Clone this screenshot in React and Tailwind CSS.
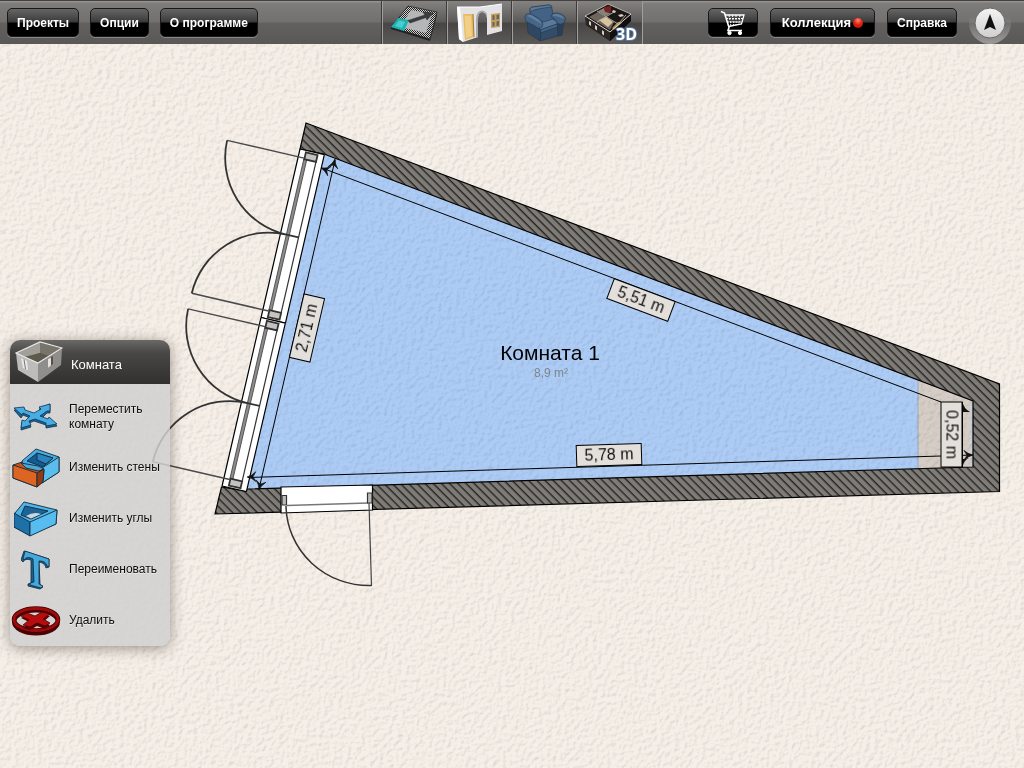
import React from "react";

const FONT = "'Liberation Sans', Arial, sans-serif";

/* ---------- toolbar ---------- */

function BarButton({ children, label, wide }) {
  return (
    <button
      type="button"
      aria-label={label}
      className={`flex h-[29px] items-center justify-center rounded-[5px] border border-[#191919] bg-[linear-gradient(to_bottom,#666_0%,#3a3a3a_48%,#000_52%,#000_100%)] leading-[16px] font-bold text-white shadow-[0_1px_0_#8a8884] ${wide ? "px-[11px] text-[13px]" : "px-[9px] text-[12px]"}`}
    >
      {children}
    </button>
  );
}

function ToolButton({ label, children }) {
  return (
    <button
      type="button"
      aria-label={label}
      className="flex h-full w-[65px] items-center justify-center border-l border-l-[#a19f9c] shadow-[-1px_0_0_#3c3b39]"
    >
      {children}
    </button>
  );
}

function DrawRoomIcon() {
  return (
    <svg width="50" height="38" viewBox="0 0 50 38" className="block">
      <defs>
        <pattern id="checks" width="2" height="2" patternUnits="userSpaceOnUse">
          <rect width="2" height="2" fill="#d0d0d0" />
          <rect width="1" height="1" fill="#222" />
          <rect x="1" y="1" width="1" height="1" fill="#222" />
        </pattern>
      </defs>
      <path d="M1 23v2l39 12 7-26V8L40 34Z" fill="#232323" />
      <path d="M1 23 18 2 47 8 40 35Z" fill="url(#checks)" stroke="#1c1c1c" strokeWidth=".7" />
      <path d="M12 20 21 6 42 10 36 29 15 24Z" fill="#b4b6b7" />
      <path d="M1 23 8 14 19 16 14 27Z" fill="#20b0b0" />
      <path d="M5 22 9 16.500 15 18 12 24Z" fill="#5fe6e2" opacity=".6" />
      <path d="M18 16.500 35 11 33 8 43 9 37 16 36 13.500 20 19Z" fill="#3d3d3d" stroke="#222" strokeWidth=".5" />
    </svg>
  );
}

function DoorsIcon() {
  return (
    <svg width="48" height="40" viewBox="0 0 48 40" className="block">
      <path d="M1 4 24 4 46 1 46 28 31 32 31 15Q30 9 26 9 22 9 22 16V34L7 39 3 36Z" fill="#e3e3e5" />
      <path d="M1 4 4 4 7 39 3 36Z" fill="#fff" />
      <path d="M20 35V16Q20 8 26 7.500 29 7.500 31 11L31 15Q30 9 26 9 22 9 22 16V34Z" fill="#a9a9ae" />
      <path d="M7 11 17 11 18 34 9 37Z" fill="#e9ba62" />
      <path d="M8.500 12.500 15 13 16 33 10 35Z" fill="#f2cf87" />
      <path d="M17 11 18 34" stroke="#9a7939" />
      <path d="M35 11 44 10 44 24 35 25Z" fill="#c99f58" />
      <path d="M36.500 12.500 38.500 12 38.500 17 36.500 17ZM40.500 12 43 11.500 43 16 40.500 16.500ZM36.500 19 38.500 19 38.500 23.500 36.500 23.500ZM40.500 18.500 43 18 43 22.500 40.500 23Z" fill="#5d656e" />
      <path d="M1 4 24 4 46 1" stroke="#fff" fill="none" />
    </svg>
  );
}

function ArmchairIcon() {
  return (
    <svg width="42" height="38" viewBox="0 0 42 38" stroke="#22364c" strokeWidth=".6" strokeLinejoin="round" className="block">
      <path d="M6 6C6 4 7 3 9 3L24 1C27 1 28 2 28 5L30 17 13 22 7 14Z" fill="#446384" />
      <path d="M6 6C6 4 7 3 9 3L24 1C27 1 28 2 28 3C19 4 11 5 6 8Z" fill="#5b7b9d" />
      <path d="M12 20 29 15 36 20 17 27Z" fill="#5a799b" />
      <path d="M16 26 36 19 38 22 37 31 16 37Z" fill="#334c67" />
      <path d="M16 26 36 19 36 22 16 29Z" fill="#486788" />
      <path d="M3 17 14 22 17 27 16 37 4 29Z" fill="#2f4761" />
      <path d="M1 13C1 10 4 9 7 10L14 14C18 16 20 20 18 23C16 25 13 24 11 22L3 18C1 17 1 15 1 13Z" fill="#466587" />
      <path d="M3 12C5 10 7 11 9 12L15 16C16 17 17 19 17 20C13 17 8 14 3 12Z" fill="#6080a2" stroke="none" />
      <path d="M33 19 40 16 38 31 34 32Z" fill="#2a4058" />
      <path d="M27 11C29 9 33 8 37 10C41 12 42 14 41 17C40 20 36 21 33 19C32 16 30 14 27 13Z" fill="#446384" />
      <path d="M29 11C32 9 35 10 38 12C39 13 40 14 40 15C36 13 32 12 29 12Z" fill="#5f7fa1" stroke="none" />
    </svg>
  );
}

function View3DIcon() {
  return (
    <svg width="60" height="42" viewBox="0 0 60 42" className="block overflow-visible">
      <g transform="translate(4 1)">
        <path d="M1 13 24 1 47 11 47 18 26 38 2 22Z" fill="#1b1716" />
        <path d="M5 14 14 9 30 19 26 27Z" fill="#6e665d" />
        <path d="M15 17 22 14 29 19 24 24Z" fill="#d8c49d" />
        <path d="M28 25 34 19 40 20 31 28Z" fill="#b98f55" />
        <path d="M20 4 27 3 27 9 21 9Z" fill="#7d1f21" />
        <path d="M14 8 20 5 21 9 27 10 22 13Z" fill="#8b8379" />
        <path d="M1 13 24 1 47 11" fill="none" stroke="#b5b0a8" />
        <path d="M13 8 34 21M13 19 30 9M35 20 42 12" fill="none" stroke="#b9b4ac" strokeWidth=".9" />
        <path d="M1 13 26 29 47 11" fill="none" stroke="#dedad3" />
        <path d="M2 15 26 30V38L2 21Z" fill="#2b2624" />
        <path d="M26 30 47 12V18L26 38Z" fill="#120f0e" />
        <path d="M5 18 7 19V23L5 21.500ZM11 22 13 23.500V27.500L11 26ZM18 27 20 28.500V32.500L18 31ZM34 12 38 11 40 13 36 14ZM29 7 32 8 31 10 28 9Z" fill="#d9cfbe" />
      </g>
      <text x="36" y="38" fontFamily="'Open Sans', sans-serif" fontSize="16" fontWeight="700" fill="#fff" stroke="#5379a8" strokeWidth="2" paintOrder="stroke">
        3D
      </text>
    </svg>
  );
}

function CartIcon() {
  return (
    <svg width="26" height="26" viewBox="0 0 26 26" fill="none" stroke="#fff" className="block">
      <path d="M1 1.500 4.500 3 9 17.500 8 20.500H22" strokeWidth="1.600" />
      <path d="M5 5H24L21.500 14 8.500 16.500" strokeWidth="1.300" />
      <path d="M6 8.500H23M7 12H22M9 5 11 16M12.500 5 13.500 16M16 5V15M20 5 18.500 14.500" strokeWidth="1" strokeDasharray="2 1" />
      <circle cx="9.500" cy="23" r="1.700" fill="#fff" strokeWidth="1" />
      <circle cx="20" cy="23" r="1.700" fill="#fff" strokeWidth="1" />
    </svg>
  );
}

function Toolbar() {
  return (
    <header className="grid h-[44px] shrink-0 grid-cols-[1fr_auto_1fr] items-center border-t border-[#45413f] bg-[linear-gradient(to_bottom,#9a9896_0%,#7e7c7a_6%,#73716f_48%,#63615f_52%,#5a5856_100%)]">
      <div className="flex items-center gap-[11px] pl-[7px]">
        <BarButton>Проекты</BarButton>
        <BarButton>Опции</BarButton>
        <BarButton>О программе</BarButton>
      </div>
      <nav className="flex h-[43px] border-r border-r-[#a19f9c] bg-[linear-gradient(to_bottom,#858381_0%,#5d5b59_48%,#484644_52%,#5c5a58_100%)]">
        <ToolButton label="Стены"><DrawRoomIcon /></ToolButton>
        <ToolButton label="Двери и окна"><DoorsIcon /></ToolButton>
        <ToolButton label="Мебель"><ArmchairIcon /></ToolButton>
        <ToolButton label="Просмотр 3D"><View3DIcon /></ToolButton>
      </nav>
      <div className="flex items-center justify-end gap-[12px] pr-[13px]">
        <BarButton label="Корзина" wide><CartIcon /></BarButton>
        <BarButton wide>
          Коллекция
          <span className="ml-[2px] h-[10px] w-[10px] rounded-full bg-[radial-gradient(circle_at_50%_25%,#ff8a78,#e0220f_45%,#a81206)]" />
        </BarButton>
        <BarButton>Справка</BarButton>
        <button type="button" aria-label="Компас" className="flex h-[42px] w-[42px] items-center justify-center rounded-full bg-[linear-gradient(to_bottom,rgba(255,255,255,0)_35%,rgba(255,255,255,0.4)_100%)]">
          <svg width="32" height="32" viewBox="0 0 32 32" className="block">
            <defs>
              <linearGradient id="dial" x1="0" y1="0" x2="0" y2="1">
                <stop offset="0" stopColor="#f4f4f4" />
                <stop offset="1" stopColor="#cfcfcf" />
              </linearGradient>
            </defs>
            <circle cx="16" cy="16" r="15" fill="url(#dial)" stroke="#6b6967" />
            <path d="M16 7 22 23 16 20 10 23Z" fill="#111" />
          </svg>
        </button>
      </div>
    </header>
  );
}

/* ---------- room palette ---------- */

function RoomIcon() {
  return (
    <svg width="48" height="42" viewBox="0 0 48 42" className="block">
      <path d="M1 12 25 1 25 12 8 18Z" fill="#a19f99" />
      <path d="M25 1 46 7 45 10 32 16 25 12Z" fill="#77746c" />
      <path d="M9 16 25 12 34 15 24 22Z" fill="#5c5a4d" />
      <path d="M1 12 23 22 23 41 3 29Z" fill="#bdbcba" />
      <path d="M23 22 47 8 46 24 23 41Z" fill="#8f8e8c" />
      <path d="M1 12 25 1 47 7 23 22Z" fill="none" stroke="#e8e8e6" strokeWidth="1.200" />
      <path d="M6 17 12 20 13 29 8 27Z" fill="#e9e9e9" />
      <path d="M9 18.500 10.500 28" stroke="#777" />
      <path d="M33 18 38 15 38 23 33 27Z" fill="#5b5040" />
      <path d="M33 18 36 16.500 36 24.500 33 27Z" fill="#e4e2de" />
    </svg>
  );
}

function MoveIcon() {
  return (
    <svg width="44" height="28" viewBox="0 0 44 28" stroke="#12324a" strokeWidth=".8" strokeLinejoin="round" className="block">
      <path d="M0 7 10 6 11 9 21 13 27 8 25 6 36 1 36 10 33 10 27 16 34 19 35 16 43 23 32 25 32 22 20 18 15 20 17 24 7 27 8 19 11 20 16 15 9 12 7 15Z" fill="#1a669b" />
      <path d="M0 5 10 4 11 7 20 10 27 6 25 4 36 1 36 8 33 8 26 13 34 16 35 14 43 21 32 23 32 20 21 16 15 18 17 22 7 25 8 17 11 18 16 13 9 10 8 12Z" fill="#48ade4" />
    </svg>
  );
}

function WallsIcon() {
  return (
    <svg width="48" height="40" viewBox="0 0 48 40" stroke="#142b3c" strokeWidth=".9" strokeLinejoin="round" className="block">
      <path d="M10 13 24 1 47 9 47 24 30 35 10 25Z" fill="#45aee4" />
      <path d="M15 13 25 5 41 10 31 19Z" fill="#155a91" />
      <path d="M25 5v7l9 4 7-6Z" fill="#2b84bf" />
      <path d="M30 20 47 9V24L30 35Z" fill="#5bbdeb" />
      <path d="M1 17 10 14 14 18 28 22 32 22 31 33 25 39 1 30Z" fill="#c4521a" />
      <path d="M9 15 14 20 27 23 32 21 26 18Z" fill="#4aa7d6" />
      <path d="M1 17 25 25 25 39 1 30Z" fill="#de6422" />
      <path d="M25 25 32 21 31 34 25 39Z" fill="#953a10" />
    </svg>
  );
}

function CornersIcon() {
  return (
    <svg width="44" height="36" viewBox="0 0 44 36" stroke="#142b3c" strokeWidth=".9" strokeLinejoin="round" className="block">
      <path d="M10 1 43 9 42 23 16 34 0 26 1 12Z" fill="#4db5e8" />
      <path d="M11 5 34 10 17 18 7 14Z" fill="#1b649a" />
      <path d="M12 15Q20 10 27 13L17 17.500Z" fill="#cfd4d6" stroke="none" />
      <path d="M0 12 16 21 16 35 0 26Z" fill="#1d70a8" />
      <path d="M16 21 43 9 42 23 16 35Z" fill="#57bdf0" />
    </svg>
  );
}

function RenameIcon() {
  return (
    <svg width="30" height="40" viewBox="0 0 30 40" stroke="#142b3c" strokeWidth=".8" strokeLinejoin="round" className="block">
      <path d="M3 1 0 10 2 12C4 9 6 9 10 10L10 33 7 34 7 36 19 39 22 37 19 34 18 12C22 13 24 14 25 18L28 17 28 9Z" fill="#195f92" />
      <path d="M4 1 28 9 28 17 26 16C25 12 22 11 18 11L18 34 22 36 20 38 9 35 9 33 13 32 12 9C8 7 5 7 3 10L2 9Z" fill="#43a8dc" />
    </svg>
  );
}

function DeleteIcon() {
  return (
    <svg width="50" height="30" viewBox="0 0 50 30" className="block">
      <ellipse cx="25" cy="16" rx="22" ry="11.500" fill="none" stroke="#4c0202" strokeWidth="4" />
      <ellipse cx="25" cy="13.500" rx="22" ry="11" fill="none" stroke="#3c0202" strokeWidth="4.500" />
      <ellipse cx="25" cy="13.500" rx="22" ry="11" fill="none" stroke="#a00a0a" strokeWidth="3" />
      <path d="M10 12 16 9 24 12 31 8 39 10 32 16 39 19 34 23 26 20 19 24 12 22 18 16Z" fill="#5a0303" />
      <path d="M10 10 16 7 24 10 31 6 39 8 32 13 39 17 34 20 26 17 19 21 12 19 18 14Z" fill="#b80d0d" stroke="#4a0202" strokeWidth=".8" />
    </svg>
  );
}

const ACTIONS = [
  { label: "Переместить комнату", Icon: MoveIcon },
  { label: "Изменить стены", Icon: WallsIcon },
  { label: "Изменить углы", Icon: CornersIcon },
  { label: "Переименовать", Icon: RenameIcon },
  { label: "Удалить", Icon: DeleteIcon },
];

function RoomPalette() {
  return (
    <aside className="absolute top-[296px] left-[10px] w-[160px] overflow-hidden rounded-[10px] shadow-[0_2px_14px_rgba(60,50,40,0.5)]">
      <h2 className="flex h-[44px] items-center gap-[8px] bg-[linear-gradient(to_bottom,#6a6967_0%,#484745_30%,#31302f_100%)] pl-[5px] text-[13px] leading-[16px] font-normal text-white">
        <RoomIcon />
        <span className="pt-[6px]">Комната</span>
      </h2>
      <ul className="bg-[#d0d0cf]/85 pt-[7px]">
        {ACTIONS.map(({ label, Icon }) => (
          <li key={label}>
            <button
              type="button"
              className="flex h-[51px] w-full items-center text-left text-[12px] leading-[15px] text-[#0b0b0b] [text-shadow:0_1px_0_rgba(255,255,255,0.6)]"
            >
              <span className="flex w-[52px] shrink-0 justify-center">
                <Icon />
              </span>
              <span className="grow pl-[7px]">{label}</span>
            </button>
          </li>
        ))}
      </ul>
    </aside>
  );
}

/* ---------- floor plan ---------- */

/* Double casement drawn along +x; the wall runs y = 0 (outside) to 25 (inside). */
function Casement({ x, y }) {
  return (
    <g transform={`matrix(-0.225 0.974 0.974 0.225 ${x} ${y})`}>
      <rect width="173" height="25" fill="#fff" />
      <path d="M0 0H173M0 25H173M0 0V25M173 0V25" stroke="#000" strokeWidth="1.200" />
      <path d="M9 6H164V9H9Z" fill="#8d8c8a" stroke="#444" strokeWidth=".8" />
      <path d="M9 18.500H164" stroke="#333" strokeWidth="1.200" />
      <path d="M2 6.500H9V18.500H2ZM164 6.500H171V18.500H164Z" fill="#c4c3c1" stroke="#333" strokeWidth="1.800" />
      <path d="M8 6V-73M165 6V-73" stroke="#4a4a4a" strokeWidth="1.500" fill="none" />
      <path d="M8 -73A79 79 0 0 1 86.500 6V18.500M165 -73A79 79 0 0 0 86.500 6" stroke="#333" strokeWidth="1.800" fill="none" />
    </g>
  );
}

/* Arrow head with its tip at the origin, pointing along +x. */
function ArrowHead({ x, y, angle }) {
  return (
    <path
      d="M0 0Q-5 -1 -9 -5L-6 0-9 5Q-5 1 0 0Z"
      transform={`translate(${x} ${y}) rotate(${angle})`}
      fill="#111"
      stroke="#111"
      strokeWidth=".6"
    />
  );
}

function SizeLabel({ x, y, angle, children }) {
  return (
    <g transform={`translate(${x} ${y}) rotate(${angle})`}>
      <rect x="-32.500" y="-10.500" width="65" height="21" fill="#e3dfda" stroke="#000" />
      <text y="5" textAnchor="middle" fontFamily={FONT} fontSize="16" fill="#111">
        {children}
      </text>
    </g>
  );
}

function FloorPlan() {
  return (
    <svg viewBox="0 44 1024 724" preserveAspectRatio="xMidYMid slice" className="absolute inset-0 h-full w-full" role="img" aria-label="План комнаты">
      <defs>
        <pattern id="hatch" width="5.800" height="5.800" patternUnits="userSpaceOnUse" patternTransform="rotate(45)">
          <rect width="5.800" height="5.800" fill="#7f7c77" />
          <rect width="5.800" height="1.400" fill="#262524" />
        </pattern>
        <filter id="paper" x="0" y="0" width="100%" height="100%" colorInterpolationFilters="sRGB">
          <feTurbulence type="fractalNoise" baseFrequency="0.22" numOctaves="3" seed="4" result="n" />
          <feDiffuseLighting in="n" surfaceScale="1" lightingColor="#fff" diffuseConstant="1.250">
            <feDistantLight azimuth="225" elevation="50" />
          </feDiffuseLighting>
        </filter>
      </defs>

      <rect x="0" y="44" width="1024" height="724" fill="#f5efe8" />

      <path d="M324 154 973 401V467L246 489Z" fill="#adccf5" />
      <path d="M918 380 973 401V467L918 469Z" fill="#d6cec6" />
      <path d="M918 380V468" stroke="#aab4c0" strokeWidth="1.500" />
      <path d="M972 402V466" stroke="#b1d1fa" strokeWidth="1" />

      <rect x="0" y="44" width="1024" height="724" filter="url(#paper)" className="mix-blend-multiply" opacity=".24" />

      <path
        d="M306 123 999.500 384V491.500L215 514 221.500 487 246 491 247 489 973 467V401L324 154 300 149Z"
        fill="url(#hatch)"
        stroke="#000"
        strokeWidth="1.200"
      />

      <Casement x={300} y={149} />
      <Casement x={261} y={317.5} />

      <path d="M281 487 372.500 485V510L281 513Z" fill="#fff" stroke="#000" strokeWidth="1.200" />
      <path d="M287 505.500 368 503" stroke="#777" strokeWidth="1.500" />
      <path d="M282 495.500H286.500V505H282ZM367.500 493H372V503H367.500Z" fill="#bbb" stroke="#333" strokeWidth="1.200" />
      <path d="M286 506A83 81 0 0 0 371.500 585.500" fill="none" stroke="#333" strokeWidth="1.500" />
      <path d="M369 503 371.500 586" stroke="#444" strokeWidth="1.200" />

      <g stroke="#000" strokeWidth="1">
        <path d="M322 168 941 402" />
        <path d="M248 477.500 973 455" />
        <path d="M335 160 259 489" />
        <path d="M962.500 402V467" />
      </g>
      <ArrowHead x={321} y={168} angle={200} />
      <ArrowHead x={335} y={159} angle={-77} />
      <ArrowHead x={247} y={477} angle={178} />
      <ArrowHead x={259} y={490} angle={103} />
      <ArrowHead x={973} y={455} angle={-2} />
      <path d="M962.500 402Q964 409 970 412L963 412ZM962.500 467Q964 460 969 458L963 459Z" fill="#111" />

      <SizeLabel x={641} y={300} angle={20.6}>5,51 m</SizeLabel>
      <SizeLabel x={307} y={328} angle={-77}>2,71 m</SizeLabel>
      <SizeLabel x={609} y={455} angle={-1.8}>5,78 m</SizeLabel>
      <SizeLabel x={951.5} y={434.5} angle={90}>0,52 m</SizeLabel>

      <text x="550" y="360" textAnchor="middle" fontFamily={FONT} fontSize="21" fill="#000">
        Комната 1
      </text>
      <text x="551" y="377" textAnchor="middle" fontFamily={FONT} fontSize="12" fill="#7f858e">
        8,9 m²
      </text>
    </svg>
  );
}

export default function App() {
  return (
    <div className="flex min-h-screen flex-col bg-[#f1ebe4] font-['Liberation_Sans',Arial,sans-serif]">
      <Toolbar />
      <main className="relative min-h-[640px] grow overflow-hidden">
        <FloorPlan />
        <RoomPalette />
      </main>
    </div>
  );
}
